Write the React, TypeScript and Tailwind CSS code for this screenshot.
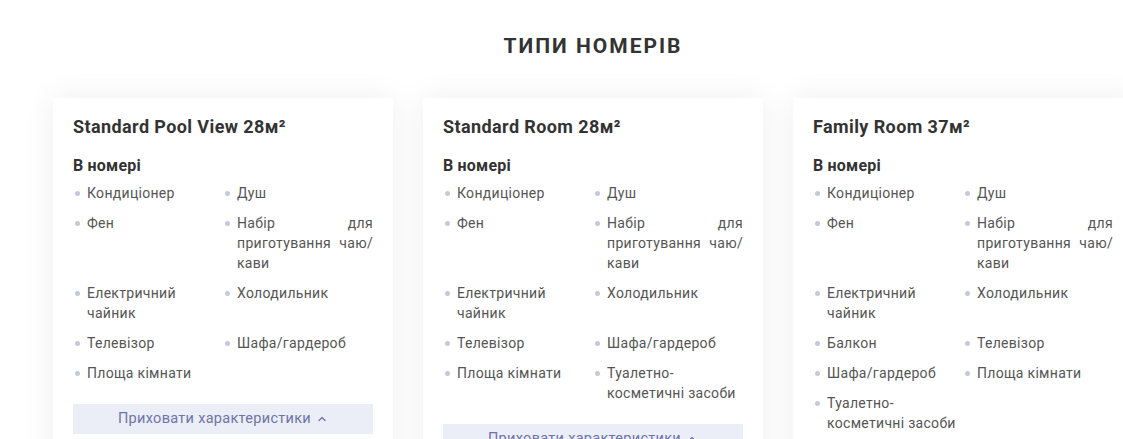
import { ChevronUp } from "lucide-react";

type Room = { title: string; items: string[] };

const rooms: Room[] = [
  {
    title: "Standard Pool View 28м²",
    items: [
      "Кондиціонер",
      "Душ",
      "Фен",
      "Набір для приготування чаю/ кави",
      "Електричний чайник",
      "Холодильник",
      "Телевізор",
      "Шафа/гардероб",
      "Площа кімнати",
    ],
  },
  {
    title: "Standard Room 28м²",
    items: [
      "Кондиціонер",
      "Душ",
      "Фен",
      "Набір для приготування чаю/ кави",
      "Електричний чайник",
      "Холодильник",
      "Телевізор",
      "Шафа/гардероб",
      "Площа кімнати",
      "Туалетно-косметичні засоби",
    ],
  },
  {
    title: "Family Room 37м²",
    items: [
      "Кондиціонер",
      "Душ",
      "Фен",
      "Набір для приготування чаю/ кави",
      "Електричний чайник",
      "Холодильник",
      "Балкон",
      "Телевізор",
      "Шафа/гардероб",
      "Площа кімнати",
      "Туалетно-косметичні засоби",
    ],
  },
];

function RoomCard({ room }: { room: Room }) {
  return (
    <div className="w-[340px] shrink-0 bg-white px-5 pt-[17px] pb-10 shadow-[0_0_30px_rgba(0,0,0,0.07)]">
      <h3 className="text-[18px] font-bold leading-6 tracking-[0.4px] text-[#333]">{room.title}</h3>
      <h4 className="mt-[15px] text-[16px] font-bold leading-6 tracking-[0.2px] text-[#333]">В номері</h4>
      <ul className="mt-[5px] grid grid-cols-2 gap-y-[10px]">
        {room.items.map((item, i) => (
          <li key={i} className="flex text-[14px] leading-5 tracking-[0.3px] text-[#555]">
            <span className="mt-[8px] mr-[7px] ml-[2px] h-[5px] w-[5px] shrink-0 rounded-full bg-[#c7c8da]" />
            <span className="text-justify">{item}</span>
          </li>
        ))}
      </ul>
      <button className="mt-[21px] flex h-[30px] w-full items-center justify-center gap-[5px] bg-[#eceef7] text-[14.5px] tracking-[0.3px] text-[#6f73a8]">
        Приховати характеристики
        <ChevronUp size={12} strokeWidth={2.5} />
      </button>
    </div>
  );
}

export default function App() {
  return (
    <div className="h-[439px] w-full overflow-hidden bg-white font-['Roboto',sans-serif]">
      <div className="ml-[53px] w-[1080px]">
        <h2 className="pt-[31px] text-center text-[21px] font-bold leading-[30px] tracking-[2px] text-[#333]">
          ТИПИ НОМЕРІВ
        </h2>
        <div className="mt-[37px] flex gap-[30px]">
          {rooms.map((r) => (
            <RoomCard key={r.title} room={r} />
          ))}
        </div>
      </div>
    </div>
  );
}
